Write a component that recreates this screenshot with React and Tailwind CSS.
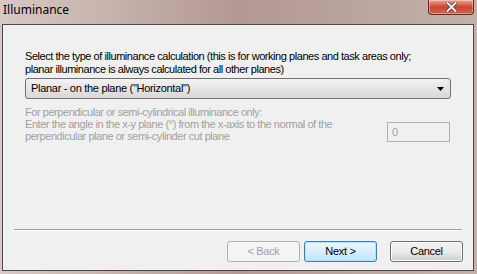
import React from 'react';

const font = { fontFamily: '"Liberation Sans", Arial, sans-serif' };

const WinButton = ({ children, disabled, isDefault, className = '' }) => (
    <button
        disabled={disabled}
        className={
            'h-[21px] w-[73px] rounded-[3px] border text-[11px] leading-none tracking-[-0.3px] ' +
            className +
            ' ' +
            (disabled
                ? 'border-[#adb2b5] bg-[#f4f4f4] text-[#a0a0a0]'
                : isDefault
                ? 'border-[#3c7fb1] bg-gradient-to-b from-[#eaf6fd] via-[#d9f0fc] to-[#bee6fd] text-black shadow-[inset_0_0_0_1px_#b8e0f6]'
                : 'border-[#707070] bg-gradient-to-b from-[#f2f2f2] via-[#ebebeb] to-[#cfcfcf] text-black shadow-[inset_0_0_0_1px_#fcfcfc]')
        }
    >
        {children}
    </button>
);

export default function App() {
    return (
        <div
            className="flex h-[274px] w-[477px] flex-col overflow-hidden bg-gradient-to-r from-[#d8c8c3] via-[#b39893] to-[#c4b0aa]"
            style={font}
        >
            {/* Title bar */}
            <div className="relative h-[24px] shrink-0">
                <span className="absolute left-[3px] top-[1px] text-[12px] text-black" style={{ fontFamily: '"Noto Sans", "Liberation Sans", sans-serif' }}>
                    Illuminance
                </span>
                <button className="absolute right-[3px] top-0 flex h-[15px] w-[46px] items-center justify-center rounded-b-[4px] border border-t-0 border-[#6b2a22] bg-gradient-to-b from-[#e8a493] via-[#c9462f] to-[#d8634b] shadow-[inset_0_0_0_1px_rgba(255,255,255,0.35)]">
                    <svg width="11" height="10" viewBox="0 0 11 10">
                        <path d="M1.5 1 L9.5 9 M9.5 1 L1.5 9" stroke="#3a3a3a" strokeWidth="3.2" strokeLinecap="square" />
                        <path d="M1.5 1 L9.5 9 M9.5 1 L1.5 9" stroke="#ffffff" strokeWidth="1.8" strokeLinecap="square" />
                    </svg>
                </button>
            </div>

            {/* Client area */}
            <div className="mb-[3px] ml-[2px] mr-[3px] flex flex-1 flex-col border border-[#4a4a4a] bg-[#f0f0f0]">
                <div className="px-[22px] pt-[25px]">
                    <p className="whitespace-nowrap text-[11px] leading-[13px] tracking-[-0.45px] text-black">
                        Select the type of illuminance calculation (this is for working planes and task areas only;
                        <br />
                        planar illuminance is always calculated for all other planes)
                    </p>

                    <div className="mt-[2px] flex h-[21px] w-[426px] items-center justify-between rounded-[3px] border border-[#707070] bg-gradient-to-b from-[#f2f2f2] to-[#d8d8d8] pl-[5px] pr-[6px] text-[11px] tracking-[-0.3px] text-black">
                        <span>Planar - on the plane ("Horizontal")</span>
                        <svg width="7" height="4" viewBox="0 0 7 4">
                            <path d="M0 0 H7 L3.5 4 Z" fill="#000" />
                        </svg>
                    </div>

                    <div className="mt-[7px] flex items-end justify-between pr-[1px]">
                        <p className="whitespace-nowrap text-[11px] leading-[12px] tracking-[-0.45px] text-[#a0a0a0]">
                            For perpendicular or semi-cylindrical illuminance only:
                            <br />
                            Enter the angle in the x-y plane (°) from the x-axis to the normal of the
                            <br />
                            perpendicular plane or semi-cylinder cut plane
                        </p>
                        <div className="flex h-[20px] w-[63px] items-center border border-[#afafaf] bg-[#f0f0f0] pl-[4px] text-[11px] text-[#a0a0a0]">0</div>
                    </div>
                </div>

                <div className="mx-[11px] mt-[87px] border-t border-b border-t-[#a0a0a0] border-b-white" />

                <div className="mt-[10px] flex justify-end gap-[4px] pr-[10px]">
                    <WinButton disabled>&lt; Back</WinButton>
                    <WinButton isDefault>Next &gt;</WinButton>
                    <WinButton className="ml-[9px]">Cancel</WinButton>
                </div>
            </div>
        </div>
    );
}
